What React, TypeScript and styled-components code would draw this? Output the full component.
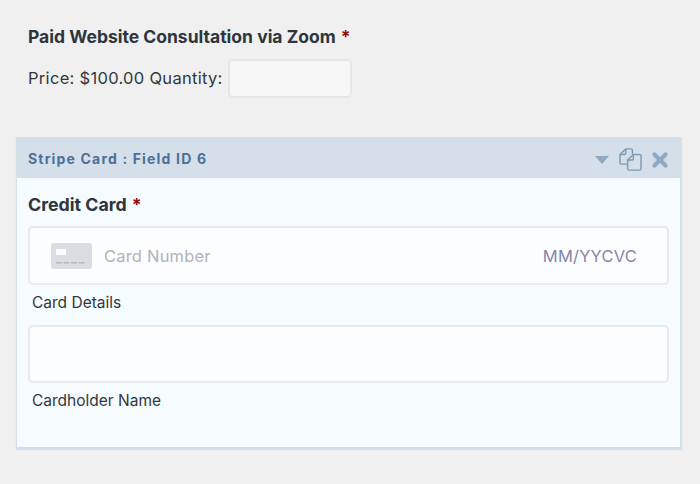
import React from 'react'
import styled, { createGlobalStyle } from 'styled-components'

const GlobalStyles = createGlobalStyle`
  html, body {
    margin: 0;
    padding: 0;
    background: #f0f0f0;
  }
  body {
    font-family: Inter, "Liberation Sans", sans-serif;
    color: #2c3338;
    -webkit-font-smoothing: antialiased;
  }
`

const Page = styled.div`
  width: 700px;
  height: 484px;
  box-sizing: border-box;
  padding: 26px 18px 0 16px;
  overflow: hidden;
`

const Product = styled.section`
  padding-left: 12px;
  height: 111px;
`

const FieldTitle = styled.div<{ $size: number }>`
  font-size: ${({ $size }) => $size}px;
  line-height: 22px;
  font-weight: 700;
  color: #2f353d;
`

const Required = styled.span`
  color: #8f0f0f;
  margin-left: 5px;
`

const PriceRow = styled.div`
  display: flex;
  align-items: center;
  gap: 5px;
  margin-top: 11px;
  font-size: 16.5px;
  letter-spacing: 0.3px;
  line-height: 39px;
  color: #32373c;
`

const QuantityInput = styled.div`
  width: 124px;
  height: 39px;
  box-sizing: border-box;
  background: #f7f7f7;
  border: 2px solid #e6e6e6;
  border-radius: 5px;
`

const Panel = styled.section`
  background: #f6fbff;
  border: 1px solid #d5dfea;
  border-width: 0 2px 2px 1px;
  box-shadow: 0 1px 1px rgba(180, 195, 215, 0.35);
`

const PanelHeader = styled.header`
  height: 41px;
  box-sizing: border-box;
  margin-left: -1px;
  margin-right: -2px;
  padding: 2px 14px 0 12px;
  display: flex;
  align-items: center;
  justify-content: space-between;
  background: #d5dfea;
`

const PanelTitle = styled.div`
  font-size: 14px;
  font-weight: 700;
  letter-spacing: 1.17px;
  color: #4a7199;
`

const PanelTools = styled.div`
  display: flex;
  align-items: center;
  gap: 10px;
  margin-top: 2px;
`

const PanelBody = styled.div`
  padding: 16px 11px 37px 11px;
`

const CardBox = styled.div<{ $height: number }>`
  height: ${({ $height }) => $height}px;
  margin-top: 10px;
  box-sizing: border-box;
  display: flex;
  align-items: center;
  padding: 0 30px 0 21px;
  background: #fcfdff;
  border: 2px solid #e6e9ed;
  border-radius: 5px;
`

const CardNumber = styled.span`
  flex: 1;
  margin-left: 12px;
  font-size: 16.5px;
  letter-spacing: 0.2px;
  color: #b0b3b8;
`

const CardExpiry = styled.span`
  font-size: 16.5px;
  letter-spacing: 0.2px;
  color: #8686a8;
`

const Sublabel = styled.div<{ $bottom: number }>`
  margin: 8px 0 ${({ $bottom }) => $bottom}px 4px;
  font-size: 15.5px;
  line-height: 19px;
  color: #32373c;
`

function CardIcon() {
  return (
    <svg width="41" height="26" viewBox="0 0 41 26">
      <rect width="41" height="26" rx="3" fill="#dcdde3" />
      <rect x="5" y="6" width="10" height="6" fill="#fcfcfd" />
      {[5, 12.5, 20, 27.5].map((x) => (
        <rect key={x} x={x} y="19" width="6" height="1.6" fill="#b9bac4" />
      ))}
    </svg>
  )
}

function ArrowIcon() {
  return (
    <svg width="14" height="8" viewBox="0 0 14 8">
      <path d="M0 0H14L7 8Z" fill="#8fa9c0" />
    </svg>
  )
}

function DuplicateIcon() {
  return (
    <svg width="23" height="23" viewBox="0 0 24 25" preserveAspectRatio="none" fill="none" stroke="#7d9bb3" strokeWidth="1.5" strokeLinejoin="round">
      <path d="M9 17.5H2.5A1.5 1.5 0 0 1 1 16V7L7 1H12.5A1.5 1.5 0 0 1 14 2.5V7" />
      <path d="M7 1V6A1 1 0 0 1 6 7H1" />
      <path d="M9 13L15 7H21.5A1.5 1.5 0 0 1 23 8.5V22.5A1.5 1.5 0 0 1 21.5 24H10.5A1.5 1.5 0 0 1 9 22.5Z" />
      <path d="M15 7V12A1 1 0 0 1 14 13H9" />
    </svg>
  )
}

function CloseIcon() {
  return (
    <svg width="16" height="16" viewBox="0 0 16 16">
      <path d="M2.5 2.5L13.5 13.5M13.5 2.5L2.5 13.5" stroke="#8fa9c0" strokeWidth="4.2" strokeLinecap="round" />
    </svg>
  )
}

export default function App(): JSX.Element {
  return (
    <Page>
      <GlobalStyles />
      <Product>
        <FieldTitle $size={17.5}>
          Paid Website Consultation via Zoom<Required>*</Required>
        </FieldTitle>
        <PriceRow>
          <span>Price: $100.00 Quantity:</span>
          <QuantityInput />
        </PriceRow>
      </Product>
      <Panel>
        <PanelHeader>
          <PanelTitle>Stripe Card : Field ID 6</PanelTitle>
          <PanelTools>
            <ArrowIcon />
            <DuplicateIcon />
            <CloseIcon />
          </PanelTools>
        </PanelHeader>
        <PanelBody>
          <FieldTitle $size={17.8}>
            Credit Card<Required>*</Required>
          </FieldTitle>
          <CardBox $height={59}>
            <CardIcon />
            <CardNumber>Card Number</CardNumber>
            <CardExpiry>MM/YYCVC</CardExpiry>
          </CardBox>
          <Sublabel $bottom={13}>Card Details</Sublabel>
          <CardBox $height={58} />
          <Sublabel $bottom={0}>Cardholder Name</Sublabel>
        </PanelBody>
      </Panel>
    </Page>
  )
}
